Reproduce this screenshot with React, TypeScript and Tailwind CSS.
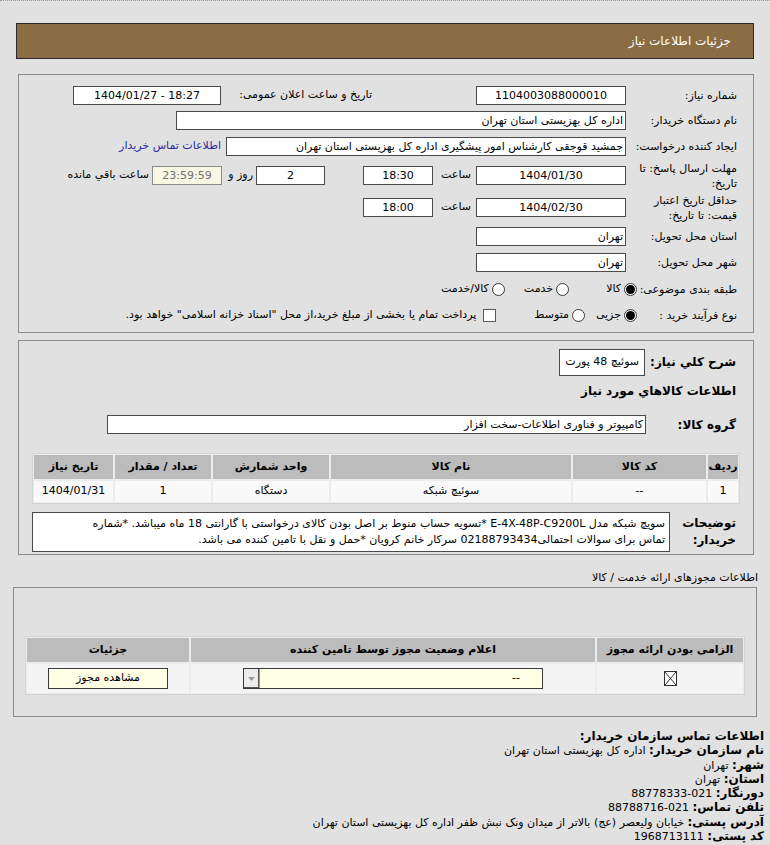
import React from 'react';

const Field = ({ className, children, ltr }: { className: string; children?: React.ReactNode; ltr?: boolean }) => (
  <div
    dir={ltr ? 'ltr' : undefined}
    className={`h-[19px] border border-[#4a4a4a] bg-white flex items-center leading-none whitespace-nowrap overflow-hidden ${className}`}
  >
    {children}
  </div>
);

const Radio = ({ checked }: { checked?: boolean }) => (
  <span className="inline-flex w-[13px] h-[13px] shrink-0 rounded-full border border-[#3a3a3a] bg-white items-center justify-center">
    {checked && <span className="w-[9px] h-[9px] rounded-full bg-black" />}
  </span>
);

const Row = ({
  className,
  labelClass = 'w-[100px]',
  label,
  children,
}: {
  className: string;
  labelClass?: string;
  label: React.ReactNode;
  children?: React.ReactNode;
}) => (
  <div className={`flex items-center ${className}`}>
    <div className={`${labelClass} shrink-0 leading-[15px] whitespace-nowrap`}>{label}</div>
    {children}
  </div>
);

const goodsHead = ['ردیف', 'کد کالا', 'نام کالا', 'واحد شمارش', 'تعداد / مقدار', 'تاریخ نیاز'];
const goodsRow = ['1', '--', 'سوئیچ شبکه', 'دستگاه', '1', '1404/01/31'];

const contact: [string, string, boolean?][] = [
  ['نام سازمان خریدار:', 'اداره کل بهزیستی استان تهران'],
  ['شهر:', 'تهران'],
  ['استان:', 'تهران'],
  ['دورنگار:', '88778333-021', true],
  ['تلفن تماس:', '88788716-021', true],
  ['آدرس پستی:', 'خیابان ولیعصر (عج) بالاتر از میدان ونک نبش ظفر اداره کل بهزیستی استان تهران'],
  ['کد پستی:', '1968713111', true],
];

export default function App() {
  return (
    <div
      dir="rtl"
      className="w-[770px] h-[845px] overflow-hidden bg-[#e1e1e1] text-[11px] text-black font-['DejaVu_Sans',sans-serif]"
    >
      <div className="h-px border-t border-dotted border-[#9a9a9a]" />

      {/* title bar */}
      <div className="mt-[22px] mx-[16px] h-[36px] bg-[#8b6d43] border border-[#2a2a2a] flex items-center pr-[22px] text-white text-[12px]">
        جزئیات اطلاعات نیاز
      </div>

      {/* main info */}
      <div className="mt-[15px] ml-[18px] mr-[16px] border border-[#8a8a8a] pr-[16px] pt-[8px] pb-[4px]">
        <Row className="h-[24px]" label="شماره نیاز:">
          <Field className="mr-[11px] w-[150px] justify-center">1104003088000010</Field>
          <span className="mr-[104px] w-[150px]">تاریخ و ساعت اعلان عمومی:</span>
          <Field ltr className="mr-[1px] w-[148px] justify-center">1404/01/27 - 18:27</Field>
        </Row>
        <Row className="h-[27px]" label="نام دستگاه خریدار:">
          <Field className="mr-[11px] w-[450px] pr-[2px]">اداره کل بهزیستی استان تهران</Field>
        </Row>
        <Row className="h-[25px]" labelClass="w-[111px]" label="ایجاد کننده درخواست:">
          <Field className="w-[400px] pr-[2px]">جمشید قوجقی کارشناس امور پیشگیری اداره کل بهزیستی استان تهران</Field>
          <span className="mr-[5px] text-[#2b2ba0]">اطلاعات تماس خریدار</span>
        </Row>
        <Row
          className="h-[33px]"
          label={
            <>
              مهلت ارسال پاسخ: تا
              <br />
              تاریخ:
            </>
          }
        >
          <Field className="mr-[11px] w-[150px] justify-center">1404/01/30</Field>
          <span className="mr-[5px] w-[38px]">ساعت</span>
          <Field className="w-[70px] justify-center">18:30</Field>
          <Field className="mr-[38px] w-[69px] justify-center">2</Field>
          <span className="mr-[3px] w-[31px]">روز و</span>
          <Field className="w-[70px] justify-center !bg-[#f7f7e4] !border-[#8a8a8a] text-[#707070]">23:59:59</Field>
          <span className="mr-[3px]">ساعت باقي مانده</span>
        </Row>
        <Row
          className="h-[31px]"
          label={
            <>
              حداقل تاريخ اعتبار
              <br />
              قیمت: تا تاریخ:
            </>
          }
        >
          <Field className="mr-[11px] w-[150px] justify-center">1404/02/30</Field>
          <span className="mr-[5px] w-[38px]">ساعت</span>
          <Field className="w-[70px] justify-center">18:00</Field>
        </Row>
        <Row className="h-[26px]" label="استان محل تحویل:">
          <Field className="mr-[11px] w-[150px] pr-[2px]">تهران</Field>
        </Row>
        <Row className="h-[27px]" label="شهر محل تحویل:">
          <Field className="mr-[11px] w-[150px] pr-[2px]">تهران</Field>
        </Row>
        <Row className="h-[26px]" label="طبقه بندی موضوعی:">
          <Radio checked />
          <span className="mr-[3px]">کالا</span>
          <span className="mr-[37px] flex"><Radio /></span>
          <span className="mr-[3px]">خدمت</span>
          <span className="mr-[19px] flex"><Radio /></span>
          <span className="mr-[3px]">کالا/خدمت</span>
        </Row>
        <Row className="h-[26px]" label="نوع فرآیند خرید :">
          <Radio checked />
          <span className="mr-[3px]">جزیی</span>
          <span className="mr-[11px] flex"><Radio /></span>
          <span className="mr-[3px]">متوسط</span>
          <span className="mr-[38px] w-[13px] h-[13px] border border-[#5a5a5a] bg-white shrink-0" />
          <span className="mr-[7px]">پرداخت تمام یا بخشی از مبلغ خرید،از محل "اسناد خزانه اسلامی" خواهد بود.</span>
        </Row>
      </div>

      {/* goods */}
      <div className="mt-[7px] ml-[18px] mr-[16px] border border-[#8a8a8a] px-[13px] pt-[7px] pb-[2px]">
        <div className="flex items-center h-[28px] pr-[4px]">
          <span className="font-bold text-[12px]">شرح کلي نياز:</span>
          <div className="mr-[5px] h-[27px] border border-[#4a4a4a] bg-white flex items-center px-[5px]">سوئیچ 48 پورت</div>
        </div>
        <div className="h-[30px] flex items-center pr-[4px] font-bold text-[12px]">اطلاعات کالاهاي مورد نياز</div>
        <div className="mt-[9px] flex items-center h-[19px] pr-[4px]">
          <span className="w-[90px] shrink-0 font-bold text-[12px]">گروه کالا:</span>
          <Field className="w-[539px] pr-[2px]">کامپیوتر و فناوری اطلاعات-سخت افزار</Field>
        </div>
        <div className="mt-[19px] grid grid-cols-[30px_133px_240px_116px_96px_1fr] gap-[2px] border border-[#d4d4d4] bg-[#ececec] p-[1px]">
          {goodsHead.map((h) => (
            <div key={h} className="h-[24px] bg-[#bcbcbc] flex items-center justify-center font-bold whitespace-nowrap">{h}</div>
          ))}
          {goodsRow.map((c, i) => (
            <div key={i} className="h-[21px] bg-[#f9f9f9] flex items-center justify-center">{c}</div>
          ))}
        </div>
        <div className="mt-[8px] flex items-center pr-[4px]">
          <div className="w-[66px] shrink-0 font-bold text-[12px] leading-[17px]">
            توضیحات
            <br />
            خریدار:
          </div>
          <div className="flex-1 h-[40px] border border-[#4a4a4a] bg-white px-[4px] pt-[3px] leading-[16px]">
            سویچ شبکه مدل E-4X-48P-C9200L *تسویه حساب منوط بر اصل بودن کالای درخواستی با گارانتی 18 ماه میباشد. *شماره
            <br />
            تماس برای سوالات احتمالی02188793434 سرکار خانم کرویان *حمل و نقل با تامین کننده می باشد.
          </div>
        </div>
      </div>

      {/* permits */}
      <div className="mt-[16px] h-[14px] pr-[12px] leading-[14px]">اطلاعات مجوزهای ارائه خدمت / کالا</div>
      <div className="mt-[2px] mx-[13px] border border-[#8a8a8a] px-[11px] pt-[48px] pb-[21px]">
        <div className="grid grid-cols-[146px_404px_1fr] gap-[2px] border border-[#d4d4d4] bg-[#ececec] p-[1px]">
          <div className="h-[24px] bg-[#bcbcbc] flex items-center justify-center font-bold">الزامی بودن ارائه مجوز</div>
          <div className="h-[24px] bg-[#bcbcbc] flex items-center justify-center font-bold">اعلام وضعیت مجوز توسط تامین کننده</div>
          <div className="h-[24px] bg-[#bcbcbc] flex items-center justify-center font-bold">جزئیات</div>
          <div className="h-[29px] bg-[#f4f4f4] flex items-center justify-center">
            <svg width="13" height="15" viewBox="0 0 13 15">
              <rect x="0.5" y="0.5" width="12" height="14" fill="#fff" stroke="#333" />
              <path d="M1 1 L12 14 M12 1 L1 14" stroke="#333" strokeWidth="1" />
            </svg>
          </div>
          <div className="h-[29px] bg-[#f4f4f4] flex items-center justify-center">
            <div className="w-[300px] h-[21px] border border-[#3a3a3a] bg-[#ffffe6] flex items-center">
              <span className="flex-1 pr-[22px]">--</span>
              <span className="w-[16px] h-[19px] border-r border-[#9a9a9a] bg-[#ececec] flex items-center justify-center shadow-[inset_-1px_-1px_0_#555]">
                <svg width="7" height="4" viewBox="0 0 7 4"><path d="M0 0 L7 0 L3.5 4 Z" fill="#999" /></svg>
              </span>
            </div>
          </div>
          <div className="h-[29px] bg-[#f4f4f4] flex items-center justify-center">
            <div className="w-[120px] h-[21px] border border-[#3a3a3a] bg-[#ffffe6] flex items-center justify-center">مشاهده مجوز</div>
          </div>
        </div>
      </div>

      {/* buyer contact */}
      <div className="mt-[12px] pr-[6px]">
        <div className="h-[14.3px] leading-[14.3px] whitespace-nowrap font-bold text-[12px]">اطلاعات تماس سازمان خریدار:</div>
        {contact.map(([k, v, ltr]) => (
          <div key={k} className="h-[14.3px] leading-[14.3px] whitespace-nowrap">
            <span className="font-bold text-[12px]">{k}</span>{' '}
            {ltr ? <span dir="ltr" className="inline-block">{v}</span> : v}
          </div>
        ))}
        <div className="h-[14.3px] leading-[14.3px] whitespace-nowrap font-bold text-[12px]">اطلاعات ایجاد کننده درخواست:</div>
      </div>
    </div>
  );
}
